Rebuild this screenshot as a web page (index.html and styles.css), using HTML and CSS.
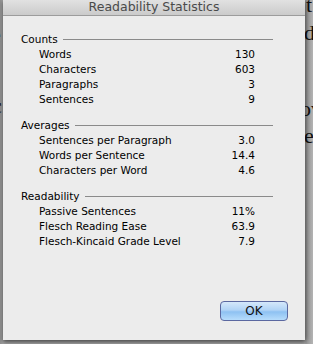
FILE: index.html
```html
<!DOCTYPE html>
<html lang="en">
<head>
  <meta charset="UTF-8" />
  <meta name="viewport" content="width=device-width, initial-scale=1.0" />
  <title>Readability Statistics</title>
  <link rel="stylesheet" href="styles.css">
</head>
<body>
  <div class="backdrop">
    <span class="glyph g-t">t</span>
    <span class="glyph g-d">d</span>
    <span class="glyph g-ov">ov</span>
    <span class="glyph g-e">e</span>
    <span class="glyph g-l1">e</span>
    <span class="glyph g-l2">c</span>
  </div>

  <div class="dialog">
    <div class="titlebar">Readability Statistics</div>

    <div class="content">
      <div class="group">
        <div class="group-head"><span>Counts</span><span class="rule"></span></div>
        <div class="row"><span>Words</span><span>130</span></div>
        <div class="row"><span>Characters</span><span>603</span></div>
        <div class="row"><span>Paragraphs</span><span>3</span></div>
        <div class="row"><span>Sentences</span><span>9</span></div>
      </div>

      <div class="group">
        <div class="group-head"><span>Averages</span><span class="rule"></span></div>
        <div class="row"><span>Sentences per Paragraph</span><span>3.0</span></div>
        <div class="row"><span>Words per Sentence</span><span>14.4</span></div>
        <div class="row"><span>Characters per Word</span><span>4.6</span></div>
      </div>

      <div class="group">
        <div class="group-head"><span>Readability</span><span class="rule"></span></div>
        <div class="row"><span>Passive Sentences</span><span>11%</span></div>
        <div class="row"><span>Flesch Reading Ease</span><span>63.9</span></div>
        <div class="row"><span>Flesch-Kincaid Grade Level</span><span>7.9</span></div>
      </div>
    </div>

    <div class="actions">
      <button type="button">OK</button>
    </div>
  </div>
</body>
</html>
```

FILE: styles.css
```css
body {
  margin: 0;
  padding: 0;
  width: 313px;
  height: 344px;
  overflow: hidden;
  background: linear-gradient(to right, #8f8f8f 0, #a3a3a3 3px, #a3a3a3 305px, #9a9a9a 306px, #b4b4b4 313px);
  font-family: "DejaVu Sans", "Noto Sans", sans-serif;
  position: relative;
}

.backdrop {
  position: absolute;
  inset: 0;
  z-index: 0;
  font-family: "Liberation Serif", serif;
  font-size: 22px;
  color: #111;
}

.glyph {
  position: absolute;
  line-height: 1;
}

.g-t { left: 306px; top: -6px; }
.g-d { left: 304px; top: 22px; }
.g-ov { left: 300px; top: 98px; }
.g-e { left: 304px; top: 125px; }
.g-l1 { left: -9px; top: 24px; }
.g-l2 { left: -8px; top: 95px; }

.dialog {
  position: relative;
  z-index: 1;
  margin-left: 3px;
  width: 302px;
  height: 340px;
  background: #ececec;
  display: flex;
  flex-direction: column;
  box-shadow: 0 2px 4px rgba(0, 0, 0, 0.45), 2px 0 5px rgba(0, 0, 0, 0.25);
}

.titlebar {
  height: 15px;
  line-height: 14px;
  text-align: center;
  font-size: 12.5px;
  color: #4a4a4a;
  background: linear-gradient(#e4e4e4, #cbcbcb);
  border-bottom: 1px solid #9c9c9c;
  margin-top: -2px;
  padding-top: 2px;
}

.content {
  padding: 16px 32px 0 18px;
  font-size: 10.5px;
  color: #000;
  line-height: 15px;
}

.group {
  margin-bottom: 11px;
}

.group-head {
  display: flex;
  align-items: center;
  gap: 5px;
}

.rule {
  flex: 1;
  height: 1px;
  background: #8a8a8a;
}

.row {
  display: flex;
  justify-content: space-between;
  padding: 0 18px;
}

.actions {
  margin-top: auto;
  display: flex;
  justify-content: flex-end;
  padding: 0 17px 19px 0;
}

.actions button {
  width: 68px;
  height: 20px;
  border: 1px solid #5b68a0;
  border-radius: 4px;
  background: linear-gradient(#d5e8fb 0, #b0d3f6 45%, #8ec1f2 55%, #b7ddfc 100%);
  font-family: "DejaVu Sans", sans-serif;
  font-size: 12px;
  color: #111;
  padding: 0;
}
```
